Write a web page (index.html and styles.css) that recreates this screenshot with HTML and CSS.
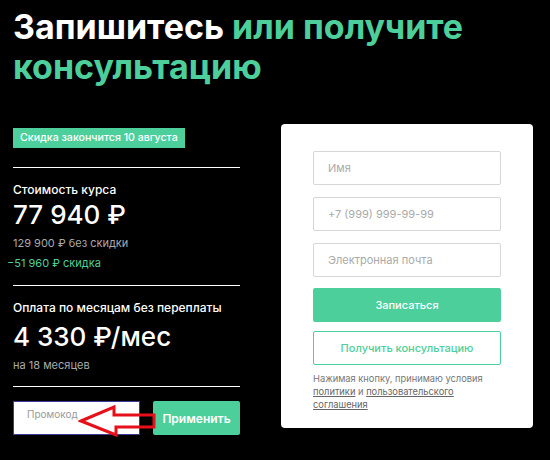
FILE: index.html
```html
<!DOCTYPE html>
<html lang="ru">
<head>
<meta charset="utf-8">
<link rel="stylesheet" href="styles.css">
</head>
<body>
<div class="page">
  <h1 class="title">Запишитесь <span class="accent">или получите консультацию</span></h1>
  <div class="cols">
    <div class="left">
      <div class="badge">Скидка закончится 10 августа</div>
      <div class="block first">
        <div class="label">Стоимость курса</div>
        <div class="price">77 940 ₽</div>
        <div class="sub">129 900 ₽ без скидки</div>
        <div class="discount">−51 960 ₽ скидка</div>
      </div>
      <div class="block">
        <div class="label">Оплата по месяцам без переплаты</div>
        <div class="price monthly">4 330 ₽/мес</div>
        <div class="sub">на 18 месяцев</div>
      </div>
      <div class="promo">
        <div class="promo-input">Промокод</div>
        <button class="apply">Применить</button>
        <svg class="arrow" width="82" height="34" viewBox="0 0 82 34">
          <polygon points="3,17 36,3 36,11 76,11 76,23 38,23 38,31" fill="none" stroke="#e5101a" stroke-width="3" stroke-linejoin="miter"/>
        </svg>
      </div>
    </div>
    <div class="card">
      <div class="field">Имя</div>
      <div class="field">+7 (999) 999-99-99</div>
      <div class="field">Электронная почта</div>
      <button class="btn primary">Записаться</button>
      <button class="btn outline">Получить консультацию</button>
      <p class="legal">Нажимая кнопку, принимаю условия <a>политики</a> и <a>пользовательского соглашения</a></p>
    </div>
  </div>
</div>
</body>
</html>
```
FILE: styles.css
```css
html, body {
  margin: 0;
  background: #000;
}
body {
  font-family: "Inter", "Roboto", "Liberation Sans", sans-serif;
  color: #fff;
  width: 550px;
  height: 460px;
  overflow: hidden;
}
.page {
  padding: 7px 0 0 13px;
}
.title {
  margin: 0;
  font-size: 34px;
  line-height: 40px;
  font-weight: 700;
  letter-spacing: 0;
  width: 500px;
}
.accent {
  color: #4ccf9b;
}
.cols {
  display: flex;
  margin-top: 38px;
}
.left {
  width: 227px;
}
.badge {
  display: inline-block;
  background: #4ccf9b;
  color: #fff;
  font-size: 10.6px;
  font-weight: 500;
  height: 20px;
  line-height: 20px;
  padding: 0 7px;
  margin-top: 1px;
}
.block {
  border-top: 1px solid #fff;
  margin-top: 14px;
  padding-top: 14px;
}
.block.first {
  margin-top: 19px;
}
.label {
  font-size: 12px;
  line-height: 16px;
  font-weight: 500;
}
.price {
  font-size: 26px;
  line-height: 34px;
  font-weight: 500;
  margin-top: 0;
}
.price.monthly {
  margin-top: 4px;
}
.sub {
  font-size: 11px;
  color: #aaa;
  margin-top: 4px;
  line-height: 15px;
}
.discount {
  font-size: 11px;
  color: #4ccf9b;
  margin-top: 5px;
  margin-left: -6px;
  line-height: 15px;
}
.promo {
  position: relative;
  border-top: 1px solid #fff;
  margin-top: 13px;
  padding-top: 14px;
  display: flex;
  gap: 13px;
}
.promo-input {
  box-sizing: border-box;
  width: 127px;
  height: 34px;
  background: #fff;
  border: 1px solid #3d3a9a;
  color: #999;
  font-size: 10px;
  padding: 6px 0 0 13px;
}
.apply {
  width: 87px;
  height: 34px;
  border: none;
  border-radius: 2px;
  background: #4ccf9b;
  color: #fff;
  font-family: inherit;
  font-size: 12px;
  font-weight: 600;
  padding: 0;
}
.arrow {
  position: absolute;
  left: 65px;
  top: 17px;
}
.card {
  box-sizing: border-box;
  width: 252px;
  height: 304px;
  margin-left: 41px;
  margin-top: -1px;
  background: #fff;
  border-radius: 4px;
  padding: 27px 32px 0 32px;
  display: flex;
  flex-direction: column;
}
.field {
  box-sizing: border-box;
  height: 34px;
  border: 1px solid #d6d6d6;
  border-radius: 2px;
  color: #aaa;
  font-size: 11px;
  line-height: 32px;
  padding-left: 14px;
  margin-bottom: 12px;
}
.btn {
  box-sizing: border-box;
  height: 34px;
  border-radius: 2px;
  font-family: inherit;
  font-size: 11px;
  font-weight: 500;
  padding: 0;
}
.primary {
  background: #4ccf9b;
  border: none;
  color: #fff;
  margin-top: -1px;
}
.outline {
  background: #fff;
  border: 1px solid #4ccf9b;
  color: #4ccf9b;
  margin-top: 9px;
}
.legal {
  margin: 7px 0 0 0;
  font-size: 9.3px;
  line-height: 13px;
  color: #777;
}
.legal a {
  color: #666;
  text-decoration: underline;
}
```
